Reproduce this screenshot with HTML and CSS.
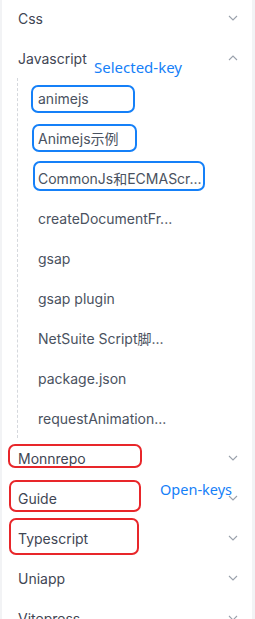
FILE: index.html
```html
<!DOCTYPE html>
<html lang="zh">
<head>
<meta charset="utf-8">
<link rel="stylesheet" href="styles.css">
</head>
<body>
<nav class="sidebar">
  <ul class="menu">
    <li class="group"><div class="title"><span>Css</span><svg class="chev" viewBox="0 0 10 6"><path d="M1 1l4 4 4-4"/></svg></div></li>
    <li class="group open">
      <div class="title"><span>Javascript</span><svg class="chev" viewBox="0 0 10 6"><path d="M1 5l4-4 4 4"/></svg>
        <span class="note note-sel">Selected-key</span>
      </div>
      <ul class="sub">
        <li class="item"><span>animejs</span><i class="mark blue m1"></i></li>
        <li class="item"><span>Animejs示例</span><i class="mark blue m2"></i></li>
        <li class="item"><span>CommonJs和ECMAScr...</span><i class="mark blue m3"></i></li>
        <li class="item"><span>createDocumentFr...</span></li>
        <li class="item"><span>gsap</span></li>
        <li class="item"><span>gsap plugin</span></li>
        <li class="item"><span>NetSuite Script脚...</span></li>
        <li class="item"><span>package.json</span></li>
        <li class="item"><span>requestAnimation...</span></li>
      </ul>
    </li>
    <li class="group"><div class="title"><span>Monnrepo</span><svg class="chev" viewBox="0 0 10 6"><path d="M1 1l4 4 4-4"/></svg><i class="mark red r1"></i></div></li>
    <li class="group"><div class="title"><span>Guide</span><svg class="chev" viewBox="0 0 10 6"><path d="M1 1l4 4 4-4"/></svg><i class="mark red r2"></i><span class="note note-open">Open-keys</span></div></li>
    <li class="group"><div class="title"><span>Typescript</span><svg class="chev" viewBox="0 0 10 6"><path d="M1 1l4 4 4-4"/></svg><i class="mark red r3"></i></div></li>
    <li class="group"><div class="title"><span>Uniapp</span><svg class="chev" viewBox="0 0 10 6"><path d="M1 1l4 4 4-4"/></svg></div></li>
    <li class="group"><div class="title"><span>Vitepress</span><svg class="chev" viewBox="0 0 10 6"><path d="M1 1l4 4 4-4"/></svg></div></li>
  </ul>
</nav>
</body>
</html>
```

FILE: styles.css
```css
html, body {
  margin: 0;
  padding: 0;
  height: 619px;
  overflow: hidden;
  background: #f2f3f5;
}
body {
  font-family: Inter, "Noto Sans CJK SC", sans-serif;
  font-size: 14px;
  color: #3f4654;
}
.sidebar {
  margin: 0 3px 0 2px;
  background: #ffffff;
  height: 619px;
  overflow: hidden;
}
.menu, .sub {
  list-style: none;
  margin: 0;
  padding: 0;
}
.menu {
  margin-top: -2px;
}
.title {
  position: relative;
  height: 40px;
  display: flex;
  align-items: center;
  justify-content: space-between;
  padding: 0 14px 0 16px;
}
.chev {
  width: 10px;
  height: 6px;
  fill: none;
  stroke: #9aa1ac;
  stroke-width: 1.1;
}
.sub {
  margin-left: 15px;
  border-left: 1px dashed #d5d8dd;
  padding: 0;
}
.item {
  position: relative;
  height: 40px;
  display: flex;
  align-items: center;
  padding-left: 20px;
  color: #4a5260;
}
.mark {
  position: absolute;
  border-radius: 7px;
  box-sizing: border-box;
  border: 2.5px solid;
}
.blue { border-color: #1580f8; }
.red { border-color: #e8262a; }
.m1 { left: 13px; top: 7px; width: 104px; height: 28px; }
.m2 { left: 14px; top: 6px; width: 105px; height: 28px; }
.m3 { left: 15px; top: 3px; width: 172px; height: 30px; }
.r1 { left: 6px; top: 6px; width: 134px; height: 24px; }
.r2 { left: 7px; top: 2px; width: 132px; height: 32px; }
.r3 { left: 7px; top: 0; width: 130px; height: 37px; }
.note {
  position: absolute;
  color: #1580f8;
  font-family: "Noto Sans", sans-serif;
  font-size: 15px;
  white-space: nowrap;
}
.note-sel { left: 92px; top: 19px; }
.note-open { left: 158px; top: 1px; font-size: 14.5px; }
```
